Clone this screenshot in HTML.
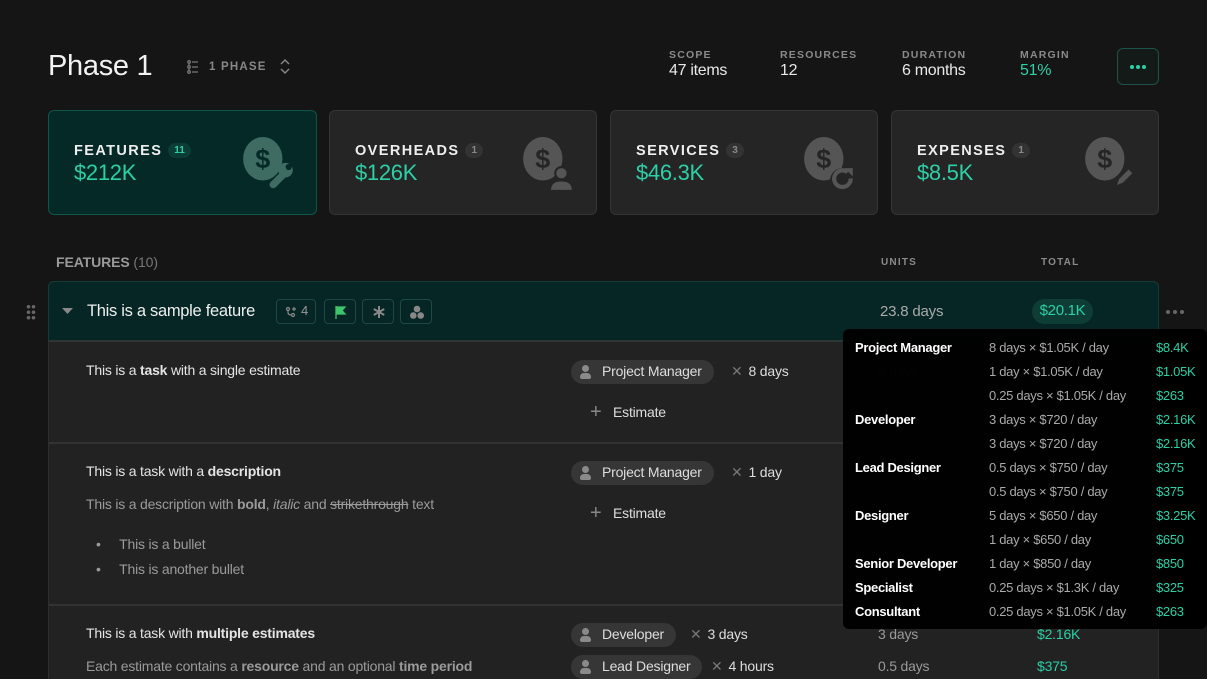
<!DOCTYPE html>
<html><head><meta charset="utf-8"><style>
*{margin:0;padding:0;box-sizing:border-box}
body{width:1207px;height:679px;overflow:hidden;background:#151515;font-family:"Liberation Sans",sans-serif;color:#e6e6e6;position:relative}
.a{position:absolute;white-space:nowrap}
.lbl{font-size:10.5px;font-weight:bold;letter-spacing:1.2px;color:#8a8a8a}
.val{font-size:16px;color:#e8e8e8;letter-spacing:-0.3px}
.card{position:absolute;top:110px;height:105px;border-radius:6px;background:#252525;border:1px solid #343434}
.card .t{position:absolute;left:25px;top:32px;font-size:14.5px;font-weight:bold;letter-spacing:1.4px;color:#eee}
.card .b{display:inline-block;margin-left:6px;background:#333;color:#888;font-size:10px;border-radius:8px;padding:2px 6px;letter-spacing:0;vertical-align:2px}
.card .v{position:absolute;left:25px;top:49px;font-size:22px;color:#2ccfa6;letter-spacing:-0.3px}
.card svg{position:absolute;right:20px;top:26px}
.row{font-size:14px;letter-spacing:-0.2px;color:#e4e4e4}
.desc{font-size:14px;letter-spacing:-0.2px;color:#9a9a9a}
.chip{position:absolute;height:24px;border-radius:12px;background:#363636;font-size:14px;color:#ddd;padding:3px 12px 0 31px;letter-spacing:-0.2px}
.chip:before{content:"";position:absolute;left:11px;top:5px;width:7px;height:7px;border-radius:50%;background:#8a8a8a}
.chip:after{content:"";position:absolute;left:9px;top:13px;width:11px;height:6px;border-radius:4px 4px 2px 2px;background:#8a8a8a}
.x{font-size:14px;color:#ddd;letter-spacing:-0.2px}
.x span{color:#777;margin-right:6px}
.tt{font-size:13px;letter-spacing:-0.3px}
.tn{font-weight:bold;color:#fff}
.td{color:#aaa}
.tv{color:#2ccfa6}
.ib{position:absolute;top:299px;height:25px;border:1px solid #1d4a42;border-radius:4px}
</style></head><body>

<div class="a" style="left:48px;top:50px;font-size:29px;color:#f2f2f2;letter-spacing:-0.3px">Phase 1</div>
<svg class="a" style="left:187px;top:60px" width="12" height="14" viewBox="0 0 12 14"><g fill="none" stroke="#777" stroke-width="1.3"><circle cx="2" cy="2" r="1.3"/><circle cx="2" cy="7" r="1.3"/><circle cx="2" cy="12" r="1.3"/><path d="M5 2h6M5 7h6M5 12h6M2 3.5v2M2 8.5v2"/></g></svg>
<div class="a lbl" style="left:209px;top:61px;font-size:11.5px;color:#888">1 PHASE</div>
<svg class="a" style="left:279px;top:58px" width="12" height="17" viewBox="0 0 12 17"><path d="M2 6l4-4 4 4M2 11l4 4 4-4" fill="none" stroke="#888" stroke-width="1.4"/></svg>

<div class="a lbl" style="left:669px;top:49px">SCOPE</div><div class="a val" style="left:669px;top:62px">47 items</div>
<div class="a lbl" style="left:780px;top:49px">RESOURCES</div><div class="a val" style="left:780px;top:62px">12</div>
<div class="a lbl" style="left:902px;top:49px">DURATION</div><div class="a val" style="left:902px;top:62px">6 months</div>
<div class="a lbl" style="left:1020px;top:49px">MARGIN</div><div class="a val" style="left:1020px;top:62px;color:#2ccfa6">51%</div>
<div class="a" style="left:1117px;top:48px;width:42px;height:37px;border:1px solid #1c5247;border-radius:6px;background:#131a18"><div style="position:absolute;left:12px;top:16px;width:4px;height:4px;border-radius:50%;background:#2ccfa6;box-shadow:6px 0 #2ccfa6,12px 0 #2ccfa6"></div></div>

<div class="card" style="left:48px;width:269px;background:#042926;border-color:#0e5648">
<div class="t">FEATURES<span class="b" style="background:#0b3d35;color:#2ccfa6">11</span></div><div class="v">$212K</div>
<svg width="54" height="58" viewBox="0 0 52 56"><ellipse cx="20" cy="21" rx="19" ry="21" fill="#3e6b62"/><text x="20" y="30" text-anchor="middle" font-size="26" font-weight="bold" fill="#042926" font-family="Liberation Sans">$</text><path d="M30 46l10-10" stroke="#3e6b62" stroke-width="7" stroke-linecap="round"/><circle cx="42" cy="32" r="7" fill="#3e6b62"/><circle cx="45" cy="29" r="3" fill="#042926"/></svg></div>
<div class="card" style="left:329px;width:268px">
<div class="t">OVERHEADS<span class="b">1</span></div><div class="v">$126K</div>
<svg width="54" height="58" viewBox="0 0 52 56"><ellipse cx="20" cy="21" rx="19" ry="21" fill="#555"/><text x="20" y="30" text-anchor="middle" font-size="26" font-weight="bold" fill="#252525" font-family="Liberation Sans">$</text><circle cx="38" cy="35" r="7" fill="#252525"/><circle cx="38" cy="35" r="5" fill="#555"/><path d="M28 51q0-8 10-8t10 8z" fill="#555"/></svg></div>
<div class="card" style="left:610px;width:268px">
<div class="t">SERVICES<span class="b">3</span></div><div class="v">$46.3K</div>
<svg width="54" height="58" viewBox="0 0 52 56"><ellipse cx="20" cy="21" rx="19" ry="21" fill="#555"/><text x="20" y="30" text-anchor="middle" font-size="26" font-weight="bold" fill="#252525" font-family="Liberation Sans">$</text><circle cx="38" cy="42" r="12" fill="#252525"/><path d="M46 40a8 8 0 1 1-3-6" fill="none" stroke="#555" stroke-width="4"/><path d="M40 30h8v8z" fill="#555"/></svg></div>
<div class="card" style="left:891px;width:268px">
<div class="t">EXPENSES<span class="b">1</span></div><div class="v">$8.5K</div>
<svg width="54" height="58" viewBox="0 0 52 56"><ellipse cx="20" cy="21" rx="19" ry="21" fill="#555"/><text x="20" y="30" text-anchor="middle" font-size="26" font-weight="bold" fill="#252525" font-family="Liberation Sans">$</text><path d="M30 48l3-8 10-10 5 5-10 10z" fill="#555" stroke="#252525" stroke-width="2"/></svg></div>

<div class="a" style="left:56px;top:254px;font-size:14px;font-weight:bold;color:#9a9a9a;letter-spacing:-0.1px">FEATURES <span style="font-weight:normal;color:#777">(10)</span></div>
<div class="a lbl" style="left:881px;top:257px;font-size:10px">UNITS</div>
<div class="a lbl" style="left:1041px;top:257px;font-size:10px">TOTAL</div>

<div class="a" style="left:26px;top:304px;width:10px;height:16px;background:radial-gradient(circle,#666 1.6px,transparent 2px) 0 0/5px 5.5px"></div>

<div class="a" style="left:48px;top:281px;width:1111px;height:398px;background:#222;border-left:1px solid #2e2e2e;border-right:1px solid #2e2e2e;border-radius:6px 6px 0 0"></div>
<div class="a" style="left:48px;top:281px;width:1111px;height:61px;background:#052624;border:1px solid #163b36;border-radius:6px 6px 0 0;border-bottom:2px solid #2e3634"></div>
<svg class="a" style="left:62px;top:307px" width="11" height="8"><path d="M0 1h11L5.5 7z" fill="#888"/></svg>
<div class="a" style="left:87px;top:302px;font-size:16.5px;color:#eee;letter-spacing:-0.3px">This is a sample feature</div>
<div class="ib" style="left:276px;width:40px"><svg style="position:absolute;left:8px;top:6px" width="12" height="12" viewBox="0 0 12 12"><g fill="none" stroke="#888" stroke-width="1.2"><circle cx="3" cy="3" r="1.5"/><circle cx="8" cy="9" r="1.5"/><path d="M3 4.5v2q0 2.5 3.5 2.5M9 1v4M7 3h4"/></g></svg><span style="position:absolute;left:24px;top:3px;font-size:13px;color:#999">4</span></div>
<div class="ib" style="left:324px;width:32px"><svg style="position:absolute;left:9px;top:5px" width="14" height="14" viewBox="0 0 14 14"><path d="M2 1v13M2 2h9l-3 3.5 3 3.5H2z" fill="#3ec46d" stroke="#3ec46d" stroke-width="1.3"/></svg></div>
<div class="ib" style="left:362px;width:32px"><svg style="position:absolute;left:9px;top:5px" width="14" height="14" viewBox="0 0 14 14"><path d="M7 1v12M1.8 4l10.4 6M1.8 10l10.4-6" stroke="#888" stroke-width="2"/></svg></div>
<div class="ib" style="left:400px;width:32px"><svg style="position:absolute;left:8px;top:5px" width="16" height="15" viewBox="0 0 16 15"><circle cx="8" cy="4" r="3.3" fill="#888"/><circle cx="4.3" cy="10.5" r="3.3" fill="#888"/><circle cx="11.7" cy="10.5" r="3.3" fill="#888"/></svg></div>
<div class="a" style="left:880px;top:303px;font-size:15px;color:#aaa;letter-spacing:-0.2px">23.8 days</div>
<div class="a" style="left:1032px;top:299px;width:61px;height:25px;border-radius:13px;background:#0e3d36;color:#2ccfa6;font-size:15px;text-align:center;padding-top:3px;letter-spacing:-0.3px">$20.1K</div>
<div class="a" style="left:1166px;top:310px;width:4px;height:4px;border-radius:50%;background:#666;box-shadow:7px 0 #666,14px 0 #666"></div>

<div class="a row" style="left:86px;top:362px">This is a <b>task</b> with a single estimate</div>
<div class="chip" style="left:571px;top:360px">Project Manager</div>
<div class="a x" style="left:731px;top:363px"><span>✕</span>8 days</div>
<div class="a" style="left:590px;top:401px;font-size:20px;color:#888;font-weight:300">+</div>
<div class="a row" style="left:613px;top:404px;color:#ddd">Estimate</div>
<div class="a row" style="left:878px;top:363px;color:#555">8 days</div>

<div class="a" style="left:49px;top:442px;width:1109px;height:2px;background:#333"></div>
<div class="a row" style="left:86px;top:463px">This is a task with a <b>description</b></div>
<div class="a desc" style="left:86px;top:496px">This is a description with <b>bold</b>, <i>italic</i> and <s>strikethrough</s> text</div>
<div class="a desc" style="left:96px;top:536px">•&nbsp;&nbsp;&nbsp;&nbsp;&nbsp;This is a bullet</div>
<div class="a desc" style="left:96px;top:561px">•&nbsp;&nbsp;&nbsp;&nbsp;&nbsp;This is another bullet</div>
<div class="chip" style="left:571px;top:461px">Project Manager</div>
<div class="a x" style="left:731px;top:464px"><span>✕</span>1 day</div>
<div class="a" style="left:590px;top:502px;font-size:20px;color:#888">+</div>
<div class="a row" style="left:613px;top:505px;color:#ddd">Estimate</div>

<div class="a" style="left:49px;top:604px;width:1109px;height:2px;background:#333"></div>
<div class="a row" style="left:86px;top:625px">This is a task with <b>multiple estimates</b></div>
<div class="a desc" style="left:86px;top:658px">Each estimate contains a <b>resource</b> and an optional <b>time period</b></div>
<div class="chip" style="left:571px;top:623px">Developer</div>
<div class="a x" style="left:690px;top:626px"><span>✕</span>3 days</div>
<div class="chip" style="left:571px;top:655px">Lead Designer</div>
<div class="a x" style="left:711px;top:658px"><span>✕</span>4 hours</div>
<div class="a row" style="left:878px;top:626px;color:#999">3 days</div>
<div class="a row" style="left:1037px;top:626px;color:#2ccfa6">$2.16K</div>
<div class="a row" style="left:878px;top:658px;color:#999">0.5 days</div>
<div class="a row" style="left:1037px;top:658px;color:#2ccfa6">$375</div>

<div class="a" style="left:843px;top:329px;width:364px;height:300px;background:rgba(0,0,0,0.96);border-radius:6px"></div>
<div class="a tt" style="left:855px;top:336px;line-height:24px">
<div class="tn">Project Manager</div><div>&nbsp;</div><div>&nbsp;</div>
<div class="tn">Developer</div><div>&nbsp;</div>
<div class="tn">Lead Designer</div><div>&nbsp;</div>
<div class="tn">Designer</div><div>&nbsp;</div>
<div class="tn">Senior Developer</div>
<div class="tn">Specialist</div>
<div class="tn">Consultant</div></div>
<div class="a tt td" style="left:989px;top:336px;line-height:24px">
<div>8 days × $1.05K / day</div><div>1 day × $1.05K / day</div><div>0.25 days × $1.05K / day</div><div>3 days × $720 / day</div><div>3 days × $720 / day</div><div>0.5 days × $750 / day</div><div>0.5 days × $750 / day</div><div>5 days × $650 / day</div><div>1 day × $650 / day</div><div>1 day × $850 / day</div><div>0.25 days × $1.3K / day</div><div>0.25 days × $1.05K / day</div></div>
<div class="a tt tv" style="left:1156px;top:336px;line-height:24px">
<div>$8.4K</div><div>$1.05K</div><div>$263</div><div>$2.16K</div><div>$2.16K</div><div>$375</div><div>$375</div><div>$3.25K</div><div>$650</div><div>$850</div><div>$325</div><div>$263</div></div>
</body></html>
